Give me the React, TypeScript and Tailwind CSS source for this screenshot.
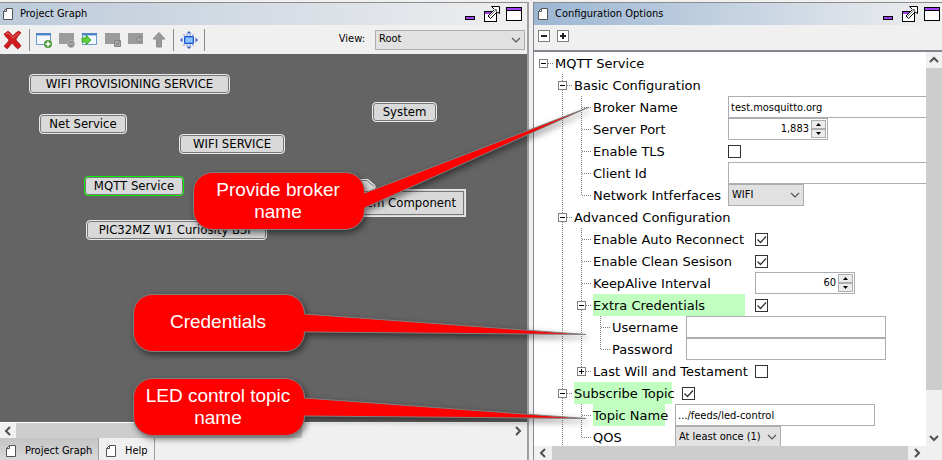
import type { ReactNode } from "react";

const UI = "font-['DejaVu_Sans_Condensed','DejaVu_Sans',sans-serif]";
const TREE = "font-['DejaVu_Sans',sans-serif]";

type Cell = "blank" | "line" | "tee" | "end" | "open" | "openMid" | "closedEnd";

function PageIcon() {
  return (
    <svg width="12" height="14" viewBox="0 0 12 14" className="shrink-0" aria-hidden="true">
      <path d="M4.5 1.5h6v11h-9v-8z" fill="#fff" stroke="#555" />
      <path d="M4.5 1.5v3h-3" fill="none" stroke="#555" />
    </svg>
  );
}

function PanelHeader({ title, tone, pad }: { title: string; tone: string; pad: string }) {
  return (
    <header className={`flex h-[23px] shrink-0 items-center border-t border-[#8c8c8c] bg-linear-to-r ${tone} ${pad}`}>
      <PageIcon />
      <h2 className={`ml-[6px] flex-1 text-[11px] leading-4 ${UI}`}>{title}</h2>
      <div className="flex items-center gap-[6px]">
        <button aria-label="Minimize" className="mr-[2px] h-4 w-3">
          <svg width="12" height="16" viewBox="0 0 12 16" shapeRendering="crispEdges">
            <path d="M1.5 10.5h9v3h-9z" fill="#a040f0" stroke="#000" />
          </svg>
        </button>
        <button aria-label="Float" className="h-4 w-4">
          <svg width="16" height="16" viewBox="0 0 16 16">
            <path d="M.5 5.500h12v10H.5z" fill="#fff" stroke="#000" shapeRendering="crispEdges" />
            <path d="M1 6h11v2H1z" fill="#a040f0" shapeRendering="crispEdges" />
            <path d="M7.500 .5h8v7l-2.500-1.500-6.500 6.500-2.500-2.500 6.500-6.500z" fill="#fff" stroke="#000" />
            <path d="M5.500 10.500l7-7M12.500 6V3.500H10" stroke="#777" fill="none" />
          </svg>
        </button>
        <button aria-label="Maximize" className="h-4 w-4">
          <svg width="16" height="16" viewBox="0 0 16 16" shapeRendering="crispEdges">
            <path d="M.5 1.500h15v13H.5z" fill="#fff" stroke="#000" />
            <path d="M1 2h14v2H1z" fill="#a040f0" />
            <path d="M1 4.500h14" stroke="#000" />
          </svg>
        </button>
      </div>
    </header>
  );
}

function Chevron({ dir = "down" }: { dir?: "up" | "down" | "left" | "right" }) {
  const d = { up: "M1 7l4-4 4 4", down: "M1 3l4 4 4-4", left: "M7 1L3 5l4 4", right: "M3 1l4 4-4 4" }[dir];
  return (
    <svg width="10" height="10" viewBox="0 0 10 10" className="shrink-0" aria-hidden="true">
      <path d={d} fill="none" stroke="#505050" strokeWidth="2" />
    </svg>
  );
}

function Dropdown({ label, value, width, height = "h-[22px]", id }: { label: string; value: string; width: string; height?: string; id?: string }) {
  return (
    <div className={`grid shrink-0 items-center ${width} ${height}`}>
      <select
        id={id}
        aria-label={label}
        className={`col-start-1 row-start-1 h-full w-full appearance-none border border-[#adadad] bg-[#e1e1e1] pl-[3px] text-[11px] ${UI}`}
      >
        <option>{value}</option>
      </select>
      <svg width="10" height="8" viewBox="0 0 10 8" className="pointer-events-none col-start-1 row-start-1 mr-1 justify-self-end" aria-hidden="true">
        <path d="M1 2l4 4 4-4" fill="none" stroke="#555" strokeWidth="1.200" />
      </svg>
    </div>
  );
}

function Divider() {
  return <span className="h-[22px] w-px bg-[#8a8a8a]" />;
}

function WindowGlyph({ muted, children }: { muted?: boolean; children?: ReactNode }) {
  return (
    <svg width="18" height="18" viewBox="0 0 18 18" aria-hidden="true">
      {muted ? (
        <path d="M1 2h15v11H1z" fill="#9b9b9b" />
      ) : (
        <>
          <path d="M1.500 2.500h14v11h-14z" fill="#f3f8fe" stroke="#6f9bd0" />
          <path d="M1 2h15v2H1z" fill="#4f84c4" />
          <path d="M2 4h13v1H2z" fill="#a9c8ee" />
        </>
      )}
      {children}
    </svg>
  );
}

function Tool({ name, children }: { name: string; children: ReactNode }) {
  return (
    <button aria-label={name} className="flex h-[22px] w-[23px] shrink-0 items-center justify-center">
      {children}
    </button>
  );
}

function Toolbar() {
  return (
    <div className="flex h-[29px] shrink-0 items-center bg-[#f0f0f0] pr-[2px] pl-[3px]">
      <button aria-label="Remove" className="mr-[7px] h-5 w-[19px]">
        <svg width="19" height="20" viewBox="0 0 19 20">
          <path d="M1 4l4-3c2 1 3 3 5 5 2-3 4-4 6-5l2 2c-2 2-4 4-5 7 2 2 4 4 5 6l-3 3c-2-1-4-4-6-6-2 3-4 5-5 6l-3-3c2-2 4-4 5-6-2-2-4-4-5-6z" fill="#cf1d1d" stroke="#a01010" strokeWidth=".6" />
          <path d="M3 4l2-1 5 5 6-5" fill="none" stroke="#e86a6a" />
        </svg>
      </button>
      <Divider />
      <span className="w-[2px]" />
      <Tool name="Add component">
        <WindowGlyph>
          <circle cx="13" cy="13" r="4" fill="#4f9a3a" />
          <path d="M10.500 13h5M13 10.500v5" stroke="#fff" strokeWidth="1.600" />
        </WindowGlyph>
      </Tool>
      <Tool name="Remove component">
        <WindowGlyph muted>
          <circle cx="13" cy="13" r="3.500" fill="#8a8a8a" stroke="#b5b5b5" />
          <path d="M11 13h4" stroke="#c5c5c5" />
        </WindowGlyph>
      </Tool>
      <Tool name="Import component">
        <WindowGlyph>
          <path d="M1 7h4V4l5 5-5 5v-3H1z" fill="#5ad13c" stroke="#2f9a1f" strokeWidth=".8" />
        </WindowGlyph>
      </Tool>
      <Tool name="Validate component">
        <WindowGlyph muted>
          <path d="M10.500 9.500h6v6h-6z" fill="#a8a8a8" stroke="#858585" />
          <path d="M12 12l1.500 2 2.500-4" fill="none" stroke="#808080" />
        </WindowGlyph>
      </Tool>
      <Tool name="Export component">
        <WindowGlyph muted>
          <path d="M16 7h-3V5L9 8.500l4 3.500v-2h3" fill="#a5a5a5" stroke="#808080" strokeWidth=".8" />
        </WindowGlyph>
      </Tool>
      <Tool name="Go up">
        <svg width="16" height="18" viewBox="0 0 16 18">
          <path d="M8 1.500l6 6.500h-3.500v8h-5V8H2z" fill="#999" stroke="#8a8a8a" />
        </svg>
      </Tool>
      <span className="w-[3px]" />
      <Divider />
      <span className="w-[3px]" />
      <Tool name="Fit to window">
        <svg width="18" height="18" viewBox="0 0 18 18">
          <path d="M4.500 5.500h9v7h-9z" fill="#5ba2f5" stroke="#2a50c8" />
          <path d="M6 7h6v4H6z" fill="#8fc4ff" />
          <path d="M3 4h12M3 14h12" stroke="#7c94d8" strokeDasharray="2 1" />
          <path d="M9 0l2.500 2.500h-5zM9 18l2.500-2.500h-5zM0 9l2.500-2.500v5zM18 9l-2.500-2.500v5z" fill="#3a62cc" />
        </svg>
      </Tool>
      <span className="w-1" />
      <Divider />
      <div className="flex flex-1 items-center justify-end gap-[10px]">
        <label htmlFor="view" className={`text-[11px] ${UI}`}>
          View:
        </label>
        <Dropdown id="view" label="View" value="Root" width="w-[150px]" height="h-5" />
      </div>
    </div>
  );
}

function GraphNode({ label, place, frame = "border-[#e8e8e8]" }: { label: string; place: string; frame?: string }) {
  return (
    <div
      className={`absolute flex h-5 items-center justify-center rounded-[4px] border bg-[#d9d9d9] text-[13px] whitespace-nowrap shadow-[inset_0_0_0_1px_#777] ${UI} ${frame} ${place}`}
    >
      {label}
    </div>
  );
}

function Canvas() {
  return (
    <div className="relative min-h-0 flex-1 overflow-hidden bg-[#646464]">
      <GraphNode label="WIFI PROVISIONING SERVICE" place="left-[29px] top-[20px] w-[201px]" />
      <GraphNode label="Net Service" place="left-[39px] top-[60px] w-[88px]" />
      <GraphNode label="WIFI SERVICE" place="left-[179px] top-[80px] w-[106px]" />
      <GraphNode label="System" place="left-[372px] top-[48px] w-[65px]" />
      <GraphNode label="MQTT Service" place="left-[84px] top-[122px] w-[100px]" frame="border-[#00f000]" />
      <GraphNode label="PIC32MZ W1 Curiosity BSP" place="left-[86px] top-[166px] w-[181px]" />
      <svg width="46" height="11" viewBox="0 0 46 11" className="absolute top-[125px] left-[330px]" aria-hidden="true">
        <path d="M0 .5h38l7 6v5H0z" fill="#d9d9d9" stroke="#e8e8e8" />
        <path d="M0 1.500h37l7 6" fill="none" stroke="#777" />
      </svg>
      <div
        className={`absolute top-[135px] left-[328px] flex h-7 w-[138px] items-center justify-end border border-[#e8e8e8] bg-[#d9d9d9] pr-[9px] text-[13px] whitespace-nowrap shadow-[inset_0_0_0_1px_#d9d9d9,inset_0_0_0_2px_#777] ${UI}`}
      >
        System Component
      </div>
    </div>
  );
}

function ProjectGraph() {
  return (
    <section className="flex min-w-0 flex-col border-r-2 border-[#a0a0a0]">
      <PanelHeader title="Project Graph" tone="from-[#bccada] to-[#efefef]" pad="pr-[5px] pl-[2px]" />
      <Toolbar />
      <Canvas />
      <div className="flex h-4 shrink-0 items-center border-t border-white">
        <button aria-label="Scroll left" className="flex h-full w-4 items-center justify-center">
          <Chevron dir="left" />
        </button>
        <div className="flex h-full flex-1">
          <div className="h-full w-[58%] bg-[#cdcdcd]" />
        </div>
        <button aria-label="Scroll right" className="flex h-full w-[18px] items-center justify-center">
          <Chevron dir="right" />
        </button>
      </div>
      <nav className={`flex h-[22px] shrink-0 text-[11px] whitespace-nowrap ${UI}`}>
        <button className="flex w-[99px] items-center gap-2 border-r border-[#a0a0a0] bg-linear-to-b from-[#c4c4c4] to-[#d8d8d8] pt-1 pl-[5px]">
          <PageIcon />
          Project Graph
        </button>
        <button className="flex w-14 items-center gap-2 border-r border-[#a0a0a0] pt-1 pl-[6px]">
          <PageIcon />
          Help
        </button>
      </nav>
    </section>
  );
}

function TreeCell({ kind }: { kind: Cell }) {
  const box = kind === "open" || kind === "openMid" || kind === "closedEnd";
  const drawing = (
    <svg width="19" height="22" viewBox="0 0 19 22" shapeRendering="crispEdges" className="block" aria-hidden="true">
      <g stroke="#808080" strokeDasharray="1 1">
        {(kind === "line" || kind === "tee" || kind === "openMid") && <path d="M9.500 0v22" />}
        {(kind === "end" || kind === "closedEnd") && <path d="M9.500 0v12" />}
        {kind !== "blank" && kind !== "line" && <path d="M10 11.500h9" />}
      </g>
      {box && (
        <>
          <path d="M5.500 7.500h8v8h-8z" fill="#fff" stroke="#808080" />
          <path d={kind === "closedEnd" ? "M7 11.500h5M9.500 9v5" : "M7 11.500h5"} stroke="#000" />
        </>
      )}
    </svg>
  );
  return box ? (
    <button aria-label={kind === "closedEnd" ? "Expand" : "Collapse"} className="shrink-0">
      {drawing}
    </button>
  ) : (
    <span className="shrink-0">{drawing}</span>
  );
}

function Row({ cells, label, width = "", id, marked, children }: { cells: Cell[]; label: string; width?: string; id?: string; marked?: boolean; children?: ReactNode }) {
  return (
    <li className="flex h-[22px] items-center">
      {cells.map((c, i) => (
        <TreeCell key={i} kind={c} />
      ))}
      <label
        htmlFor={id}
        className={`mr-[10px] ml-[2px] h-[22px] shrink-0 text-[13px] leading-6 whitespace-nowrap ${TREE} ${width} ${marked ? "bg-[#c0ffc0]" : ""}`}
      >
        {label}
      </label>
      {children}
    </li>
  );
}

function TextBox({ id, value = "" }: { id: string; value?: string }) {
  return <input id={id} type="text" defaultValue={value} className={`h-[22px] w-[200px] shrink-0 border border-[#abadb3] bg-white px-[2px] text-[11px] ${UI}`} />;
}

function Check({ id, on }: { id: string; on?: boolean }) {
  return (
    <span className="grid h-[13px] w-[13px] shrink-0">
      <input id={id} type="checkbox" defaultChecked={on} className="peer col-start-1 row-start-1 h-[13px] w-[13px] appearance-none border border-[#333] bg-white" />
      <svg width="13" height="13" viewBox="0 0 13 13" className="pointer-events-none invisible col-start-1 row-start-1 peer-checked:visible" aria-hidden="true">
        <path d="M2.500 6.500l3 3 5.500-6" fill="none" stroke="#333" strokeWidth="1.300" />
      </svg>
    </span>
  );
}

function Spinner({ id, value }: { id: string; value: string }) {
  return (
    <span className="flex h-[22px] w-[100px] shrink-0 border border-[#abadb3] bg-white p-px">
      <input id={id} type="text" defaultValue={value} className={`min-w-0 flex-1 pr-[2px] text-right text-[11px] ${UI}`} />
      <span className="flex w-[15px] flex-col">
        <button aria-label="Increase" className="flex flex-1 items-center justify-center border border-[#adadad] bg-[#ececec]">
          <svg width="5" height="3" viewBox="0 0 5 3">
            <path d="M0 3l2.500-3L5 3z" />
          </svg>
        </button>
        <button aria-label="Decrease" className="flex flex-1 items-center justify-center border border-[#adadad] bg-[#ececec]">
          <svg width="5" height="3" viewBox="0 0 5 3">
            <path d="M0 0l2.500 3L5 0z" />
          </svg>
        </button>
      </span>
    </span>
  );
}

function SmallBox({ name, d }: { name: string; d: string }) {
  return (
    <button aria-label={name}>
      <svg width="12" height="12" viewBox="0 0 12 12" shapeRendering="crispEdges">
        <path d="M.5 .5h11v11H.5z" fill="#fff" stroke="#808080" />
        <path d={d} fill="#222" />
      </svg>
    </button>
  );
}

function OptionsTree() {
  const tee: Cell[] = ["blank", "line", "tee"];
  const end: Cell[] = ["blank", "line", "end"];
  return (
    <ul className="min-w-0 flex-1 overflow-hidden">
      <Row cells={["open"]} label="MQTT Service" />
      <Row cells={["blank", "openMid"]} label="Basic Configuration" />
      <Row cells={tee} label="Broker Name" width="w-[125px]" id="broker">
        <TextBox id="broker" value="test.mosquitto.org" />
      </Row>
      <Row cells={tee} label="Server Port" width="w-[125px]" id="port">
        <Spinner id="port" value="1,883" />
      </Row>
      <Row cells={tee} label="Enable TLS" width="w-[125px]" id="tls">
        <Check id="tls" />
      </Row>
      <Row cells={tee} label="Client Id" width="w-[125px]" id="client">
        <TextBox id="client" />
      </Row>
      <Row cells={end} label="Network Intferfaces" width="w-[125px]" id="network">
        <Dropdown id="network" label="Network Intferfaces" value="WIFI" width="w-[76px]" />
      </Row>
      <Row cells={["blank", "openMid"]} label="Advanced Configuration" />
      <Row cells={tee} label="Enable Auto Reconnect" width="w-[152px]" id="reconnect">
        <Check id="reconnect" on />
      </Row>
      <Row cells={tee} label="Enable Clean Sesison" width="w-[152px]" id="clean">
        <Check id="clean" on />
      </Row>
      <Row cells={tee} label="KeepAlive Interval" width="w-[152px]" id="keepalive">
        <Spinner id="keepalive" value="60" />
      </Row>
      <Row cells={["blank", "line", "openMid"]} label="Extra Credentials" width="w-[152px]" id="extra" marked>
        <Check id="extra" on />
      </Row>
      <Row cells={["blank", "line", "line", "tee"]} label="Username" width="w-[64px]" id="user">
        <TextBox id="user" />
      </Row>
      <Row cells={["blank", "line", "line", "end"]} label="Password" width="w-[64px]" id="pass">
        <TextBox id="pass" />
      </Row>
      <Row cells={["blank", "line", "closedEnd"]} label="Last Will and Testament" width="w-[152px]" id="will">
        <Check id="will" />
      </Row>
      <Row cells={["blank", "openMid"]} label="Subscribe Topic" width="w-[98px]" id="subscribe" marked>
        <Check id="subscribe" on />
      </Row>
      <Row cells={tee} label="Topic Name" width="w-[72px]" id="topic" marked>
        <TextBox id="topic" value=".../feeds/led-control" />
      </Row>
      <Row cells={end} label="QOS" width="w-[72px]" id="qos">
        <Dropdown id="qos" label="QOS" value="At least once (1)" width="w-[106px]" />
      </Row>
    </ul>
  );
}

function ConfigurationOptions() {
  return (
    <section className="flex min-w-0 flex-col border-l border-[#858a94]">
      <PanelHeader title="Configuration Options" tone="from-[#9cb6d3] to-[#efefef]" pad="pr-[2px] pl-[3px]" />
      <div className="flex h-[25px] shrink-0 items-start gap-[7px] pt-[5px] pl-1">
        <SmallBox name="Collapse all" d="M3 5h6v2H3z" />
        <SmallBox name="Expand all" d="M3 5h6v2H3zM5 3h2v6H5z" />
      </div>
      <div className="flex min-h-0 flex-1 border-t-2 border-[#828790] bg-white">
        <OptionsTree />
        <div className="flex w-4 shrink-0 flex-col bg-[#f0f0f0]">
          <button aria-label="Scroll up" className="flex h-4 items-center justify-center">
            <Chevron dir="up" />
          </button>
          <div className="flex-1">
            <div className="h-[89%] bg-[#cdcdcd]" />
          </div>
          <button aria-label="Scroll down" className="flex h-4 items-center justify-center">
            <Chevron />
          </button>
        </div>
      </div>
      <div className="flex h-[14px] shrink-0 bg-[#f0f0f0]">
        <button aria-label="Scroll left" className="flex w-[18px] items-center justify-center">
          <Chevron dir="left" />
        </button>
        <div className="flex-1 bg-[#cdcdcd]" />
        <button aria-label="Scroll right" className="mr-4 flex w-[18px] items-center justify-center">
          <Chevron dir="right" />
        </button>
      </div>
    </section>
  );
}

function Callout({ children, place }: { children: ReactNode; place: string }) {
  return (
    <p className={`absolute flex h-[57px] w-[172px] items-center justify-center px-2 text-center font-['Liberation_Sans',Arial,sans-serif] text-[19px] leading-[22px] text-white ${place}`}>
      {children}
    </p>
  );
}

function Callouts() {
  return (
    <div className="pointer-events-none absolute inset-0">
      <svg width="942" height="460" viewBox="0 0 942 460" className="absolute top-0 left-0" aria-hidden="true">
        <g fill="#f00" stroke="#7f7f7f" strokeLinejoin="round" className="drop-shadow-[2px_3px_3px_rgba(0,0,0,0.5)]">
          <path d="M212.500 172.500h133a19 19 0 0 1 19 19V193L588 107.500 364.500 208v2.500a19 19 0 0 1-19 19h-133a19 19 0 0 1-19-19v-19a19 19 0 0 1 19-19z" />
          <path d="M152.500 294.500h133a19 19 0 0 1 19 19v.5L586 334.500 304.500 332v.5a19 19 0 0 1-19 19h-133a19 19 0 0 1-19-19v-19a19 19 0 0 1 19-19z" />
          <path d="M152.500 378.500h133a19 19 0 0 1 19 19v.5L586 418.500 304.500 416v.5a19 19 0 0 1-19 19h-133a19 19 0 0 1-19-19v-19a19 19 0 0 1 19-19z" />
        </g>
      </svg>
      <Callout place="top-[172px] left-[192px]">
        Provide broker
        <br />
        name
      </Callout>
      <Callout place="top-[293px] left-[132px]">Credentials</Callout>
      <Callout place="top-[378px] left-[132px]">
        LED control topic
        <br />
        name
      </Callout>
    </div>
  );
}

export default function App() {
  return (
    <main className="relative grid h-screen w-full grid-cols-[minmax(0,529fr)_minmax(0,409fr)] grid-rows-[minmax(0,1fr)] gap-1 overflow-hidden bg-[#f0f0f0] pt-[2px] text-black">
      <ProjectGraph />
      <ConfigurationOptions />
      <Callouts />
    </main>
  );
}
